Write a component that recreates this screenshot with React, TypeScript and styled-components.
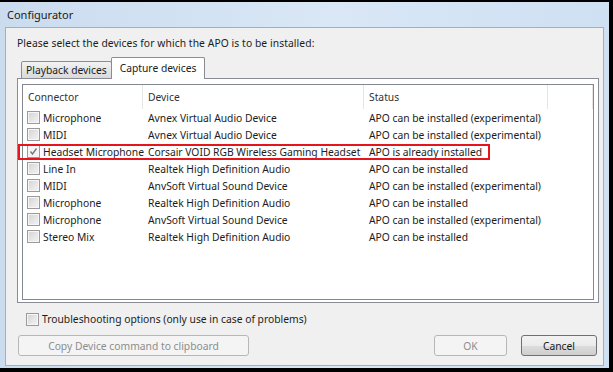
import styled, { createGlobalStyle } from 'styled-components'

const GlobalStyle = createGlobalStyle`
	html, body {
		margin: 0;
		padding: 0;
		background: #000;
	}
	body {
		font-family: "Noto Sans", "Open Sans", sans-serif;
		font-size: 10.3px;
		color: #1c1c1c;
	}
`;

const Window = styled.div`
	width: 609px;
	height: 366px;
	margin: 2px 4px 4px 0;
	background: linear-gradient(to right, #cbdcef 0%, #d9e7f6 55%, #cfe0f3 100%);
	display: flex;
	flex-direction: column;
`;

const TitleBar = styled.div`
	height: 25px;
	display: flex;
	align-items: center;
	padding-left: 7px;
	font-size: 11px;
	color: #1a1a1a;
`;

const Client = styled.div`
	flex: 1;
	margin: 0 5px 2px 5px;
	background: #f0f0f0;
	border: 1px solid #9fb0c6;
	display: flex;
	flex-direction: column;
	padding: 8px 4px 0 11px;
`;

const Prompt = styled.div`
	line-height: 15px;
	height: 15px;
	letter-spacing: 0.08px;
`;

const TabStrip = styled.div`
	display: flex;
	align-items: flex-end;
	margin: 6px 0 -1px 4px;
	height: 22px;
	position: relative;
	z-index: 1;
`;

const Tab = styled.div<{ $active?: boolean }>`
	height: ${(p) => (p.$active ? '22px' : '18px')};
	padding: 0 ${(p) => (p.$active ? '8px' : '4px')};
	margin-left: ${(p) => (p.$active ? '-1px' : '0')};
	display: flex;
	align-items: center;
	box-sizing: border-box;
	border: 1px solid #898c95;
	border-bottom: ${(p) => (p.$active ? 'none' : '1px solid #898c95')};
	background: ${(p) => (p.$active ? '#fff' : 'linear-gradient(#f3f3f3, #e5e5e5 50%, #dadada)')};
	border-radius: 2px 2px 0 0;
	padding-bottom: ${(p) => (p.$active ? '2px' : '0')};
`;

const Panel = styled.div`
	height: 225px;
	box-sizing: border-box;
	border: 1px solid #898c95;
	background: #fff;
	padding: 5px 4px 2px 4px;
	display: flex;
`;

const ListView = styled.div`
	flex: 1;
	border: 1px solid #828790;
	background: #fff;
	display: flex;
	flex-direction: column;
`;

const COLS = '120px 221px 184px 1fr';

const HeaderRow = styled.div`
	display: grid;
	grid-template-columns: ${COLS};
	height: 24px;
`;

const HeaderCell = styled.div`
	display: flex;
	align-items: center;
	padding-left: 5px;
	border-right: 1px solid #e5e5e5;
	color: #333;
`;

const Row = styled.div`
	display: grid;
	grid-template-columns: ${COLS};
	height: 17px;
	position: relative;
`;

const Cell = styled.div`
	display: flex;
	align-items: center;
	padding-left: 5px;
	white-space: nowrap;
`;

const FirstCell = styled(Cell)`
	padding-left: 4px;
	gap: 3px;
`;

const Highlight = styled.div`
	position: absolute;
	left: -5px;
	top: 1px;
	width: 472px;
	height: 16px;
	box-sizing: border-box;
	border: 2px solid #e5161b;
	pointer-events: none;
`;

const Box = styled.div<{ $checked?: boolean }>`
	width: 13px;
	height: 13px;
	box-sizing: border-box;
	border: 1px solid #9a9a9a;
	background: ${(p) => (p.$checked ? '#f4f4f4' : 'linear-gradient(135deg, #d2d2d2, #e8e8e8 60%, #f2f2f2)')};
	box-shadow: inset 0 0 0 1px #f6f6f6;
	display: flex;
	align-items: center;
	justify-content: center;
	flex-shrink: 0;
`;

const Footer = styled.div`
	display: flex;
	align-items: center;
	gap: 3px;
	height: 16px;
	margin-top: 8px;
	padding-left: 9px;
`;

const ButtonRow = styled.div`
	display: flex;
	align-items: center;
	margin-top: 8px;
	padding: 0 2px 0 1px;
	gap: 14px;
`;

const Button = styled.div<{ $disabled?: boolean; $width: number }>`
	width: ${(p) => p.$width}px;
	height: 21px;
	box-sizing: border-box;
	border-radius: 3px;
	display: flex;
	align-items: center;
	justify-content: center;
	border: 1px solid ${(p) => (p.$disabled ? '#b5b8bb' : '#707070')};
	color: ${(p) => (p.$disabled ? '#8d8d8d' : '#1a1a1a')};
	background: ${(p) =>
		p.$disabled ? '#f4f4f4' : 'linear-gradient(#f2f2f2, #ebebeb 50%, #dddddd 51%, #cfcfcf)'};
`;

const Spacer = styled.div`
	flex: 1;
`;

const devices = [
	{ connector: 'Microphone', device: 'Avnex Virtual Audio Device', status: 'APO can be installed (experimental)' },
	{ connector: 'MIDI', device: 'Avnex Virtual Audio Device', status: 'APO can be installed (experimental)' },
	{ connector: 'Headset Microphone', device: 'Corsair VOID RGB Wireless Gaming Headset', status: 'APO is already installed', checked: true },
	{ connector: 'Line In', device: 'Realtek High Definition Audio', status: 'APO can be installed' },
	{ connector: 'MIDI', device: 'AnvSoft Virtual Sound Device', status: 'APO can be installed (experimental)' },
	{ connector: 'Microphone', device: 'Realtek High Definition Audio', status: 'APO can be installed' },
	{ connector: 'Microphone', device: 'AnvSoft Virtual Sound Device', status: 'APO can be installed (experimental)' },
	{ connector: 'Stereo Mix', device: 'Realtek High Definition Audio', status: 'APO can be installed' },
];

const CheckBox = ({ checked }: { checked?: boolean }) => (
	<Box $checked={checked}>
		{checked && (
			<svg width="9" height="9" viewBox="0 0 9 9">
				<path d="M1.5 4.5 L3.5 7 L7.5 1.5" fill="none" stroke="#7a7a7a" strokeWidth="1.4" />
			</svg>
		)}
	</Box>
);

const App = () => {
	return (
		<>
			<GlobalStyle />
			<Window>
				<TitleBar>Configurator</TitleBar>
				<Client>
					<Prompt>Please select the devices for which the APO is to be installed:</Prompt>
					<TabStrip>
						<Tab>Playback devices</Tab>
						<Tab $active>Capture devices</Tab>
					</TabStrip>
					<Panel>
						<ListView>
							<HeaderRow>
								<HeaderCell>Connector</HeaderCell>
								<HeaderCell>Device</HeaderCell>
								<HeaderCell>Status</HeaderCell>
								<HeaderCell />
							</HeaderRow>
							{devices.map((d, i) => (
								<Row key={i}>
									<FirstCell>
										<CheckBox checked={d.checked} />
										{d.connector}
									</FirstCell>
									<Cell>{d.device}</Cell>
									<Cell>{d.status}</Cell>
									<Cell />
									{d.checked && <Highlight />}
								</Row>
							))}
						</ListView>
					</Panel>
					<Footer>
						<CheckBox />
						Troubleshooting options (only use in case of problems)
					</Footer>
					<ButtonRow>
						<Button $disabled $width={231}>Copy Device command to clipboard</Button>
						<Spacer />
						<Button $disabled $width={73}>OK</Button>
						<Button $width={76}>Cancel</Button>
					</ButtonRow>
				</Client>
			</Window>
		</>
	)
}

export default App
